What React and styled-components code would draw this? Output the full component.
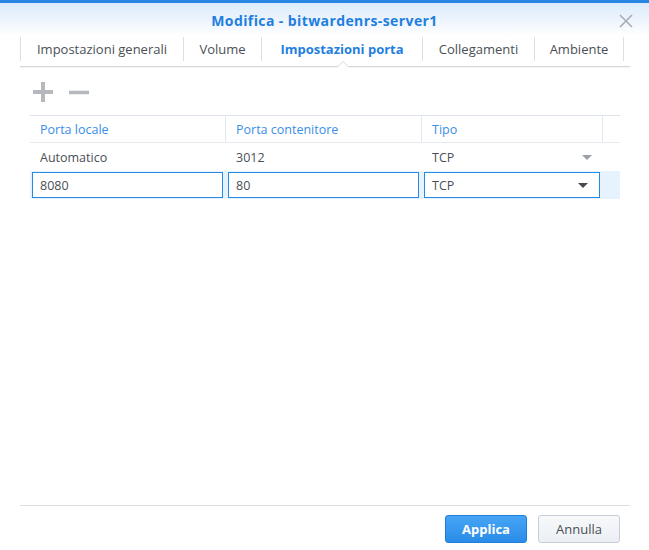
import React from 'react'
import styled, { createGlobalStyle } from 'styled-components'

const GlobalStyle = createGlobalStyle`
  html, body { margin: 0; padding: 0; background: #fff; }
  body { font-family: "Open Sans", "Liberation Sans", Arial, sans-serif; }
`

const tabs = [
  { label: 'Impostazioni generali', w: 163 },
  { label: 'Volume', w: 78 },
  { label: 'Impostazioni porta', w: 161, active: true },
  { label: 'Collegamenti', w: 112 },
  { label: 'Ambiente', w: 90 },
]

const cols = [196, 196, 181, 17]

export default function App() {
  return (
    <Dialog>
      <GlobalStyle />
      <Header>
        <Title>Modifica - bitwardenrs-server1</Title>
        <Close>
          <svg width="14" height="14" viewBox="0 0 14 14">
            <path d="M1 1 L13 13 M13 1 L1 13" stroke="#a9adb2" strokeWidth="1.6" />
          </svg>
        </Close>
      </Header>
      <TabBar>
        {tabs.map(t => (
          <Tab key={t.label} $w={t.w} $active={t.active}>{t.label}</Tab>
        ))}
      </TabBar>
      <Body>
        <Toolbar>
          <IconBtn>
            <svg width="20" height="20" viewBox="0 0 20 20">
              <path d="M0 10 H20 M10 0 V20" stroke="#b5b8bd" strokeWidth="4" />
            </svg>
          </IconBtn>
          <IconBtn>
            <svg width="20" height="20" viewBox="0 0 20 20">
              <path d="M0 10.5 H20" stroke="#b5b8bd" strokeWidth="3.5" />
            </svg>
          </IconBtn>
        </Toolbar>
        <Grid>
          <HeadRow>
            <HeadCell $w={cols[0]}>Porta locale</HeadCell>
            <HeadCell $w={cols[1]}>Porta contenitore</HeadCell>
            <HeadCell $w={cols[2]}>Tipo</HeadCell>
            <HeadCell $w={cols[3]} />
          </HeadRow>
          <Row>
            <Cell $w={cols[0]}>Automatico</Cell>
            <Cell $w={cols[1]}>3012</Cell>
            <Cell $w={cols[2]}>
              TCP
              <Arrow $color="#9aa0a6" />
            </Cell>
          </Row>
          <Row $selected>
            <EditCell $w={cols[0]}><Field>8080</Field></EditCell>
            <EditCell $w={cols[1]}><Field>80</Field></EditCell>
            <EditCell $w={cols[2]}>
              <Field>
                TCP
                <Arrow $color="#444a50" />
              </Field>
            </EditCell>
          </Row>
        </Grid>
      </Body>
      <Footer>
        <Button $primary>Applica</Button>
        <Button>Annulla</Button>
      </Footer>
    </Dialog>
  )
}

const Dialog = styled.div`
  width: 649px;
  height: 550px;
  display: flex;
  flex-direction: column;
  background: #fff;
  overflow: hidden;
`

const Header = styled.div`
  position: relative;
  height: 33px;
  border-top: 3px solid #2a86e3;
  background: linear-gradient(to bottom, #dcebfb 0%, #eef5fd 55%, #ffffff 100%);
  display: flex;
  align-items: center;
  justify-content: center;
`

const Title = styled.div`
  font-size: 14px;
  font-weight: bold;
  color: #1f7fe0;
  letter-spacing: 0.4px;
  margin-top: 1px;
`

const Close = styled.div`
  position: absolute;
  right: 16px;
  top: 11px;
  width: 14px;
  height: 14px;
  display: flex;
`

const TabBar = styled.div`
  margin: 1px 19px 0 20px;
  height: 29px;
  display: flex;
  border-bottom: 1px solid #d3d7dc;
  box-shadow: 0 1px 1px rgba(0, 0, 0, 0.04);
`

const Tab = styled.div`
  position: relative;
  width: ${p => p.$w}px;
  box-sizing: border-box;
  height: 24px;
  border-left: 1px solid #d8e0e8;
  display: flex;
  align-items: center;
  justify-content: center;
  font-size: 13px;
  color: ${p => (p.$active ? '#1f7fe0' : '#4a4f55')};
  font-weight: ${p => (p.$active ? 'bold' : 'normal')};
  &:last-child { border-right: 1px solid #d8e0e8; }
  ${p => p.$active && `
    &::before, &::after {
      content: '';
      position: absolute;
      left: 50%;
      width: 0;
      height: 0;
      border-left: 6px solid transparent;
      border-right: 6px solid transparent;
    }
    &::before {
      bottom: -6px;
      margin-left: 1px;
      border-bottom: 6px solid #d3d7dc;
      transform: translateX(-50%);
    }
    &::after {
      bottom: -7px;
      margin-left: 1px;
      border-bottom: 6px solid #fff;
      transform: translateX(-50%);
    }
  `}
`

const Body = styled.div`
  flex: 1;
  padding: 0 29px 0 30px;
`

const Toolbar = styled.div`
  height: 48px;
  display: flex;
  align-items: center;
  gap: 16px;
  padding-left: 3px;
  padding-top: 2px;
  box-sizing: border-box;
`

const IconBtn = styled.div`
  width: 20px;
  height: 20px;
  display: flex;
`

const Grid = styled.div`
  border-top: 1px solid #dde3ea;
`

const HeadRow = styled.div`
  display: flex;
  height: 26px;
  border-bottom: 1px solid #e6eaef;
`

const HeadCell = styled.div`
  width: ${p => p.$w}px;
  box-sizing: border-box;
  padding-left: 10px;
  display: flex;
  align-items: center;
  font-size: 12.5px;
  color: #3a8ee8;
  border-right: 1px solid #e3e8ee;
  &:last-child { border-right: none; flex: 1; }
`

const Row = styled.div`
  display: flex;
  height: 28px;
  background: ${p => (p.$selected ? '#e6f2fd' : 'transparent')};
`

const Cell = styled.div`
  position: relative;
  width: ${p => p.$w}px;
  box-sizing: border-box;
  padding: 0 10px;
  display: flex;
  align-items: center;
  font-size: 12.5px;
  color: #4a4f55;
`

const EditCell = styled.div`
  width: ${p => p.$w}px;
  box-sizing: border-box;
  padding: 1px 3px 1px 2px;
  display: flex;
`

const Field = styled.div`
  position: relative;
  flex: 1;
  box-sizing: border-box;
  border: 1px solid #2589e6;
  background: #fff;
  padding-left: 7px;
  display: flex;
  align-items: center;
  font-size: 12.5px;
  color: #4a4f55;
`

const Arrow = styled.span`
  position: absolute;
  right: 11px;
  top: 50%;
  margin-top: -2px;
  width: 0;
  height: 0;
  border-left: 5px solid transparent;
  border-right: 5px solid transparent;
  border-top: 5px solid ${p => p.$color};
`

const Footer = styled.div`
  margin: 0 19px 0 20px;
  height: 45px;
  box-sizing: border-box;
  border-top: 1px solid #dcdfe3;
  display: flex;
  justify-content: flex-end;
  align-items: flex-start;
  padding-top: 9px;
  padding-right: 10px;
  gap: 11px;
`

const Button = styled.div`
  width: 82px;
  height: 28px;
  box-sizing: border-box;
  border-radius: 3px;
  display: flex;
  align-items: center;
  justify-content: center;
  font-size: 13px;
  ${p => p.$primary ? `
    background: linear-gradient(to bottom, #46a5f5, #2a8ce8);
    border: 1px solid #1f7fd8;
    color: #fff;
    font-weight: bold;
  ` : `
    background: linear-gradient(to bottom, #f7f9fb, #ebeff4);
    border: 1px solid #c6cfd9;
    color: #4a4f55;
  `}
`
